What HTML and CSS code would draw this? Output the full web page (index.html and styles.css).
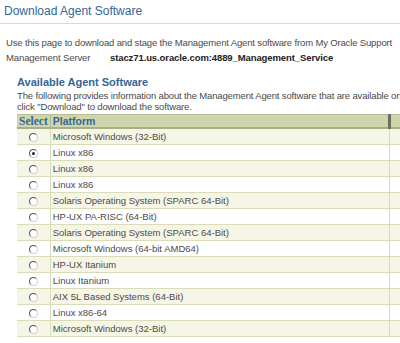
FILE: index.html
```html
<!DOCTYPE html>
<html lang="en">
<head>
    <meta charset="UTF-8">
    <title>Download Agent Software</title>
    <link rel="stylesheet" href="styles.css">
</head>
<body>
    <h1 class="page-title">Download Agent Software</h1>

    <p class="intro">Use this page to download and stage the Management Agent software from My Oracle Support</p>
    <div class="server-row">
        <span class="server-label">Management Server</span>
        <span class="server-value">stacz71.us.oracle.com:4889_Management_Service</span>
    </div>

    <div class="available">
        <h2 class="section-title">Available Agent Software</h2>
        <p class="section-desc">The following provides information about the Management Agent software that are available on click "Download" to download the software.</p>

        <table class="agent-table">
            <thead>
                <tr>
                    <th class="col-select">Select</th>
                    <th class="col-platform">Platform</th>
                    <th class="col-extra"></th>
                </tr>
            </thead>
            <tbody>
                <tr><td class="col-select"><span class="radio"></span></td><td>Microsoft Windows (32-Bit)</td><td></td></tr>
                <tr><td class="col-select"><span class="radio checked"></span></td><td>Linux x86</td><td></td></tr>
                <tr><td class="col-select"><span class="radio"></span></td><td>Linux x86</td><td></td></tr>
                <tr><td class="col-select"><span class="radio"></span></td><td>Linux x86</td><td></td></tr>
                <tr><td class="col-select"><span class="radio"></span></td><td>Solaris Operating System (SPARC 64-Bit)</td><td></td></tr>
                <tr><td class="col-select"><span class="radio"></span></td><td>HP-UX PA-RISC (64-Bit)</td><td></td></tr>
                <tr><td class="col-select"><span class="radio"></span></td><td>Solaris Operating System (SPARC 64-Bit)</td><td></td></tr>
                <tr><td class="col-select"><span class="radio"></span></td><td>Microsoft Windows (64-bit AMD64)</td><td></td></tr>
                <tr><td class="col-select"><span class="radio"></span></td><td>HP-UX Itanium</td><td></td></tr>
                <tr><td class="col-select"><span class="radio"></span></td><td>Linux Itanium</td><td></td></tr>
                <tr><td class="col-select"><span class="radio"></span></td><td>AIX 5L Based Systems (64-Bit)</td><td></td></tr>
                <tr><td class="col-select"><span class="radio"></span></td><td>Linux x86-64</td><td></td></tr>
                <tr><td class="col-select"><span class="radio"></span></td><td>Microsoft Windows (32-Bit)</td><td></td></tr>
            </tbody>
        </table>
    </div>
</body>
</html>
```

FILE: styles.css
```css
body {
    margin: 0;
    width: 400px;
    height: 343px;
    overflow: hidden;
    background-color: #fff;
    font-family: "Liberation Sans", Arial, sans-serif;
    color: #4a4a4a;
}

.page-title {
    margin: 0;
    padding: 4px 0 5px 4px;
    font-size: 12px;
    font-weight: normal;
    color: #336699;
    border-bottom: 1px solid #dcdcc0;
    width: 600px;
}

.intro {
    margin: 13px 0 0 6px;
    font-size: 9.5px;
    letter-spacing: -0.15px;
    white-space: nowrap;
}

.server-row {
    display: flex;
    margin: 4px 0 0 6px;
    font-size: 9.5px;
    letter-spacing: -0.1px;
}

.server-label {
    width: 104px;
}

.server-value {
    font-weight: bold;
    color: #222;
}

.available {
    margin: 13px 0 0 17px;
}

.section-title {
    margin: 0;
    font-size: 11px;
    font-weight: bold;
    color: #336699;
}

.section-desc {
    margin: 2px 0 0;
    width: 385px;
    font-size: 9.5px;
    letter-spacing: -0.15px;
    line-height: 11px;
}

.agent-table {
    margin-top: 2px;
    width: 420px;
    border-collapse: collapse;
    font-size: 9.5px;
}

.agent-table th {
    height: 11px;
    padding: 0 2px;
    text-align: left;
    font-size: 10.5px;
    color: #336699;
    background-color: #cfd6ac;
    border-top: 1px solid #b9bf95;
    border-bottom: 2px solid #a8ae86;
}

.agent-table th.col-select {
    font-family: "Liberation Serif", "Times New Roman", serif;
    font-size: 11.5px;
    border-right: 1px solid #b0b690;
}

.agent-table th.col-platform {
    width: 333px;
    border-right: 3px solid #6f6f60;
}

.agent-table td {
    height: 15px;
    padding: 0 2px;
    border-bottom: 1px solid #dadbb8;
    border-right: 1px solid #dadbb8;
}

.agent-table td.col-select {
    width: 27px;
    text-align: center;
}

.agent-table tbody tr:nth-child(odd) td {
    background-color: #f6f6e6;
}

.radio {
    display: inline-block;
    width: 7px;
    height: 7px;
    border-radius: 50%;
    border: 1px solid #555;
    border-right-color: #ccc;
    border-bottom-color: #ccc;
    background-color: #fff;
    position: relative;
    vertical-align: middle;
}

.radio.checked::after {
    content: "";
    position: absolute;
    left: 2px;
    top: 2px;
    width: 3px;
    height: 3px;
    border-radius: 50%;
    background-color: #222;
}
```
